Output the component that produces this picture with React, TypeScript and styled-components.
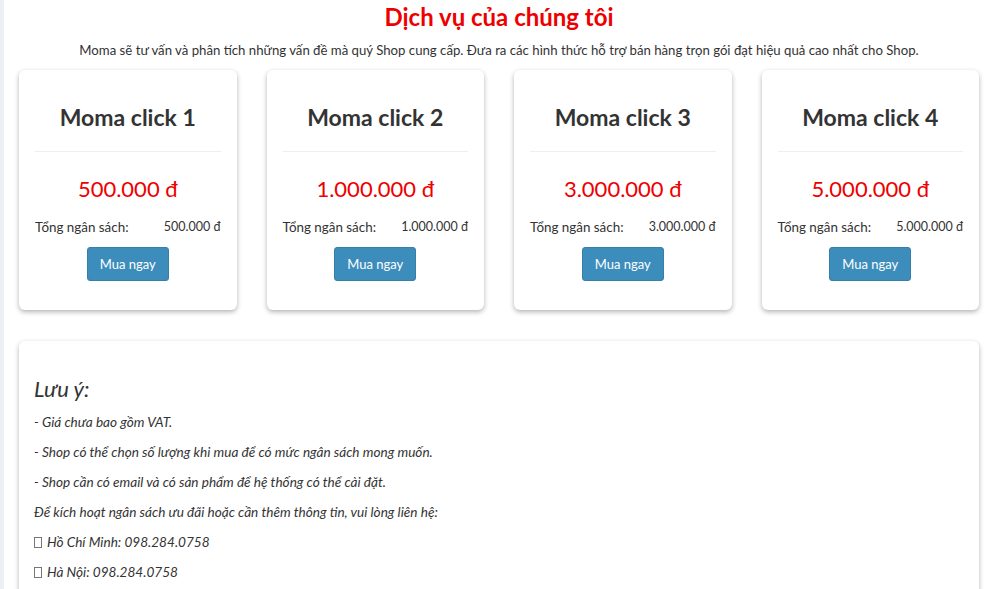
import React from "react";
import styled, { createGlobalStyle } from "styled-components";

const Global = createGlobalStyle`
  html, body { margin: 0; padding: 0; background: #ffffff; }
  body { font-family: Lato, "Open Sans", "Liberation Sans", sans-serif; color: #333; }
  * { box-sizing: border-box; }
`;

const Page = styled.div`
  min-height: 100vh;
  border-left: 4px solid #ecf0f5;
  background: #fff;
  padding: 2px 0 0 15px;
`;

const Content = styled.div`
  width: 960px;
`;

const Title = styled.h2`
  margin: 0;
  text-align: center;
  font-size: 24px;
  line-height: 30px;
  font-weight: 700;
  color: #ee0000;
`;

const Subtitle = styled.p`
  margin: 8px 0 0;
  text-align: center;
  font-size: 13.2px;
  line-height: 20px;
  color: #333;
`;

const Grid = styled.div`
  margin-top: 10px;
  display: grid;
  grid-template-columns: repeat(4, 1fr);
  column-gap: 30px;
`;

const Card = styled.div`
  background: #fff;
  border-radius: 6px;
  box-shadow: 0 2px 5px rgba(0, 0, 0, 0.3);
  padding: 32px 16px 29px;
  display: flex;
  flex-direction: column;
  align-items: stretch;
`;

const CardTitle = styled.h3`
  margin: 0;
  text-align: center;
  font-size: 23px;
  line-height: 30px;
  font-weight: 700;
  color: #333;
`;

const Divider = styled.hr`
  margin: 19px 0 0;
  border: 0;
  border-top: 1px solid #eeeeee;
`;

const Price = styled.div`
  margin-top: 22px;
  text-align: center;
  font-size: 22px;
  line-height: 30px;
  color: #ee0000;
`;

const TotalRow = styled.div`
  margin-top: 13px;
  display: flex;
  justify-content: space-between;
  font-size: 13.4px;
  line-height: 20px;
  color: #333;
`;

const Amount = styled.span`
  font-size: 12.5px;
`;

const BuyButton = styled.button`
  margin: 10px auto 0;
  width: 82px;
  height: 34px;
  border: 1px solid #367fa9;
  border-radius: 3px;
  background: #3c8dbc;
  color: #fff;
  font-family: inherit;
  font-size: 13px;
  cursor: pointer;
`;

const NoteBox = styled.div`
  margin-top: 31px;
  background: #fff;
  border-radius: 6px;
  box-shadow: 0 2px 5px rgba(0, 0, 0, 0.3);
  padding: 33px 15px 20px;
  min-height: 260px;
`;

const NoteTitle = styled.h3`
  margin: 0 0 8px;
  font-size: 22px;
  line-height: 30px;
  font-weight: 400;
  font-style: italic;
  color: #333;
`;

const NoteLine = styled.p`
  margin: 0 0 10px;
  font-size: 13.6px;
  line-height: 20px;
  font-style: italic;
  color: #333;
`;

const Tofu = styled.span`
  display: inline-block;
  width: 8px;
  height: 11px;
  border: 1px solid #777;
  margin-right: 5px;
  vertical-align: -1px;
`;

const plans = [
  { name: "Moma click 1", price: "500.000 đ" },
  { name: "Moma click 2", price: "1.000.000 đ" },
  { name: "Moma click 3", price: "3.000.000 đ" },
  { name: "Moma click 4", price: "5.000.000 đ" },
];

export default function App() {
  return (
    <>
      <Global />
      <Page>
        <Content>
          <Title>Dịch vụ của chúng tôi</Title>
          <Subtitle>
            Moma sẽ tư vấn và phân tích những vấn đề mà quý Shop cung cấp. Đưa ra các hình thức hỗ trợ bán hàng trọn gói đạt hiệu quả cao nhất cho Shop.
          </Subtitle>
          <Grid>
            {plans.map((p) => (
              <Card key={p.name}>
                <CardTitle>{p.name}</CardTitle>
                <Divider />
                <Price>{p.price}</Price>
                <TotalRow>
                  <span>Tổng ngân sách:</span>
                  <Amount>{p.price}</Amount>
                </TotalRow>
                <BuyButton>Mua ngay</BuyButton>
              </Card>
            ))}
          </Grid>
          <NoteBox>
            <NoteTitle>Lưu ý:</NoteTitle>
            <NoteLine>- Giá chưa bao gồm VAT.</NoteLine>
            <NoteLine>- Shop có thể chọn số lượng khi mua để có mức ngân sách mong muốn.</NoteLine>
            <NoteLine>- Shop cần có email và có sản phẩm để hệ thống có thể cài đặt.</NoteLine>
            <NoteLine>Để kích hoạt ngân sách ưu đãi hoặc cần thêm thông tin, vui lòng liên hệ:</NoteLine>
            <NoteLine><Tofu />Hồ Chí Minh: 098.284.0758</NoteLine>
            <NoteLine><Tofu />Hà Nội: 098.284.0758</NoteLine>
          </NoteBox>
        </Content>
      </Page>
    </>
  );
}
